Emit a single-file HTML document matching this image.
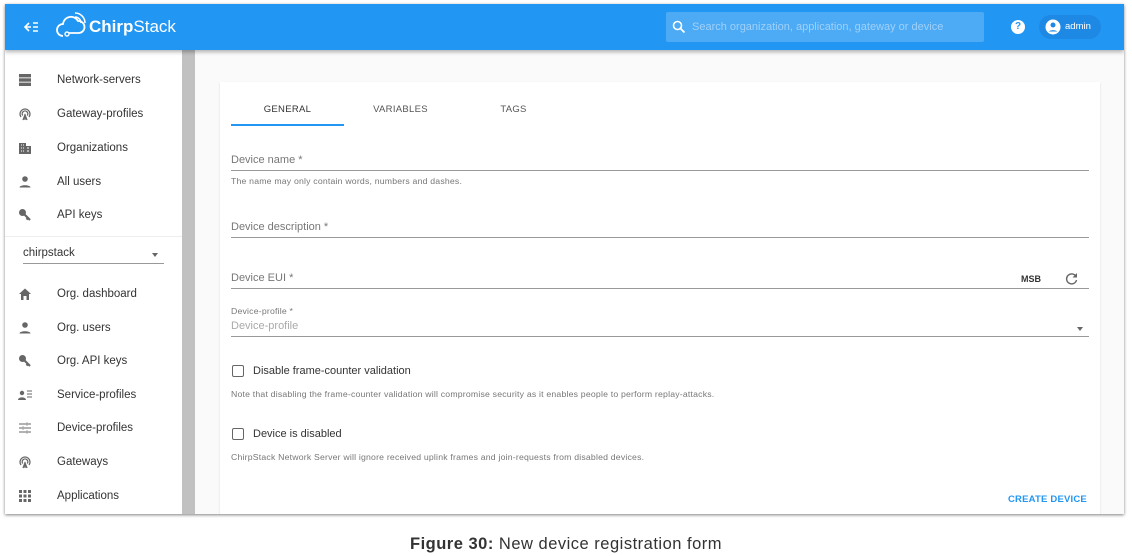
<!DOCTYPE html>
<html><head><meta charset="utf-8"><style>
*{box-sizing:border-box;margin:0;padding:0}
body{width:1132px;height:556px;background:#fff;font-family:"Liberation Sans",sans-serif;position:relative;overflow:hidden}
#frame{position:absolute;left:5px;top:4px;width:1119px;height:510px;background:#fafafa;overflow:hidden;box-shadow:0 1px 3px rgba(0,0,0,.5)}
#bar{position:absolute;left:0;top:0;width:100%;height:46px;background:#2196f3;box-shadow:0 2px 4px rgba(0,0,0,.3);z-index:3}
#side{position:absolute;left:0;top:46px;width:177px;height:464px;background:#fff}
#scroll{position:absolute;left:177px;top:46px;width:13px;height:464px;background:#c1c1c1}
.it{position:absolute;left:0;height:34px;width:177px;font-size:11.5px;color:#333}
.it span{position:absolute;left:52px;top:8px}
.it svg{position:absolute;left:13px;top:7px}
#card{position:absolute;left:215px;top:78px;width:880px;height:440px;background:#fff;box-shadow:0 1px 2px rgba(0,0,0,.12)}
.tab{position:absolute;top:22px;font-size:9.5px;color:#555;letter-spacing:.3px;width:113px;text-align:center}
.lbl{position:absolute;left:11px;font-size:11px;color:#777}
.line{position:absolute;left:11px;width:858px;height:1px;background:#999}
.help{position:absolute;left:11px;font-size:8.7px;color:#777;letter-spacing:.2px}
.cb{position:absolute;left:12px;width:12px;height:12px;border:1.5px solid #666;border-radius:2px}
.cbl{position:absolute;left:33px;font-size:11px;color:#333}
</style></head><body>
<div id="frame">
<div id="bar">
 <svg style="position:absolute;left:18px;top:16px" width="16" height="14" viewBox="0 0 16 14"><path d="M6 3L2 7l4 4M2 7h6M10 3h5M10 7h5M10 11h5" stroke="#fff" stroke-width="1.6" fill="none"/></svg>
 <svg style="position:absolute;left:50px;top:8px" width="32" height="28" viewBox="0 0 32 28"><path d="M8 24a6 6 0 0 1 0-12a8 8 0 0 1 15-3a6 6 0 0 1 1 12H14" stroke="#fff" stroke-width="1.8" fill="none"/><circle cx="12" cy="22" r="2" stroke="#fff" fill="none" stroke-width="1.4"/><path d="M20 5a6 6 0 0 1 6 6M20 1a10 10 0 0 1 10 10" stroke="#fff" stroke-width="1.5" fill="none"/></svg>
 <div style="position:absolute;left:84px;top:13px;color:#fff;font-size:17px"><b>Chirp</b>Stack</div>
 <div style="position:absolute;left:661px;top:8px;width:318px;height:30px;background:#4dabf5;border-radius:2px">
  <svg style="position:absolute;left:6px;top:8px" width="14" height="14" viewBox="0 0 14 14"><circle cx="5.5" cy="5.5" r="4" stroke="#fff" stroke-width="1.6" fill="none"/><path d="M8.5 8.5l4 4" stroke="#fff" stroke-width="1.8"/></svg>
  <span style="position:absolute;left:26px;top:9px;font-size:11px;color:#9fd0f8">Search organization, application, gateway or device</span>
 </div>
 <div style="position:absolute;left:1006px;top:16px;width:14px;height:14px;border-radius:50%;background:#fff;color:#2196f3;font-size:10px;font-weight:bold;text-align:center;line-height:14px">?</div>
 <div style="position:absolute;left:1034px;top:11px;width:62px;height:24px;border-radius:12px;background:#1e88e5"></div>
 <svg style="position:absolute;left:1040px;top:15px" width="16" height="16" viewBox="0 0 16 16"><circle cx="8" cy="8" r="7.5" fill="#fff"/><circle cx="8" cy="6" r="2.5" fill="#1e88e5"/><path d="M3.5 12.5a6 4 0 0 1 9 0" fill="#1e88e5"/></svg>
 <span style="position:absolute;left:1060px;top:17px;color:#fff;font-size:9.5px">admin</span>
</div>
<div id="side">
 <div class="it" style="top:16px"><svg width="14" height="14" viewBox="0 0 14 14"><rect x="1" y="1" width="12" height="3.4" fill="#666"/><rect x="1" y="5.3" width="12" height="3.4" fill="#666"/><rect x="1" y="9.6" width="12" height="3.4" fill="#666"/></svg><span>Network-servers</span></div>
 <div class="it" style="top:50px"><svg width="14" height="14" viewBox="0 0 14 14"><path d="M3 10a5 5 0 1 1 8 0M4.8 8.5a2.8 2.8 0 1 1 4.4 0M7 7v6M5 13l2-5 2 5" stroke="#666" stroke-width="1.3" fill="none"/></svg><span>Gateway-profiles</span></div>
 <div class="it" style="top:84px"><svg width="14" height="14" viewBox="0 0 14 14"><path d="M1 13V2h7v3h5v8z" fill="#666"/><path d="M3 4h1M5 4h1M3 7h1M5 7h1M3 10h1M5 10h1M9 7h2M9 10h2" stroke="#fff" stroke-width="1.1"/></svg><span>Organizations</span></div>
 <div class="it" style="top:118px"><svg width="14" height="14" viewBox="0 0 14 14"><circle cx="7" cy="4" r="2.8" fill="#666"/><path d="M1.5 12.5c0-3 11-3 11 0z" fill="#666"/></svg><span>All users</span></div>
 <div class="it" style="top:151px"><svg width="14" height="14" viewBox="0 0 14 14"><circle cx="4.5" cy="4.5" r="3.5" fill="#666"/><path d="M6 6l6 6M10 10l-1.5 1.5" stroke="#666" stroke-width="2.2"/></svg><span>API keys</span></div>
 <div style="position:absolute;left:0;top:186px;width:177px;height:1px;background:#eee"></div>
 <div style="position:absolute;left:18px;top:197px;font-size:11.5px;color:#333">chirpstack</div>
 <div style="position:absolute;left:147px;top:203px;border:3.5px solid transparent;border-top:4px solid #666"></div>
 <div style="position:absolute;left:18px;top:213px;width:141px;height:1px;background:#999"></div>
 <div class="it" style="top:230px"><svg width="14" height="14" viewBox="0 0 14 14"><path d="M7 1.5l6 5.5h-2v6H8.5V9h-3v4H3V7H1z" fill="#666"/></svg><span>Org. dashboard</span></div>
 <div class="it" style="top:264px"><svg width="14" height="14" viewBox="0 0 14 14"><circle cx="7" cy="4" r="2.8" fill="#666"/><path d="M1.5 12.5c0-3 11-3 11 0z" fill="#666"/></svg><span>Org. users</span></div>
 <div class="it" style="top:297px"><svg width="14" height="14" viewBox="0 0 14 14"><circle cx="4.5" cy="4.5" r="3.5" fill="#666"/><path d="M6 6l6 6M10 10l-1.5 1.5" stroke="#666" stroke-width="2.2"/></svg><span>Org. API keys</span></div>
 <div class="it" style="top:331px"><svg width="14" height="14" viewBox="0 0 14 14"><circle cx="4" cy="5" r="2.2" fill="#666"/><path d="M0 12c0-3.5 8-3.5 8 0z" fill="#666"/><path d="M9 3h5M9 6h5M9 9h5" stroke="#666" stroke-width="1.1"/></svg><span>Service-profiles</span></div>
 <div class="it" style="top:364px"><svg width="14" height="14" viewBox="0 0 14 14"><path d="M1 3h7M10 3h3M1 7h3M6 7h7M1 11h7M10 11h3M9 1.5v3M5 5.5v3M9 9.5v3" stroke="#666" stroke-width="1.1"/></svg><span>Device-profiles</span></div>
 <div class="it" style="top:398px"><svg width="14" height="14" viewBox="0 0 14 14"><path d="M3 10a5 5 0 1 1 8 0M4.8 8.5a2.8 2.8 0 1 1 4.4 0M7 7v6M5 13l2-5 2 5" stroke="#666" stroke-width="1.3" fill="none"/></svg><span>Gateways</span></div>
 <div class="it" style="top:432px"><svg width="14" height="14" viewBox="0 0 14 14" fill="#666"><rect x="1" y="1" width="3" height="3"/><rect x="5.5" y="1" width="3" height="3"/><rect x="10" y="1" width="3" height="3"/><rect x="1" y="5.5" width="3" height="3"/><rect x="5.5" y="5.5" width="3" height="3"/><rect x="10" y="5.5" width="3" height="3"/><rect x="1" y="10" width="3" height="3"/><rect x="5.5" y="10" width="3" height="3"/><rect x="10" y="10" width="3" height="3"/></svg><span>Applications</span></div>
</div>
<div id="scroll"></div>
<div id="card">
 <div class="tab" style="left:11px;color:#333">GENERAL</div>
 <div style="position:absolute;left:11px;top:42px;width:113px;height:2px;background:#2196f3"></div>
 <div class="tab" style="left:124px">VARIABLES</div>
 <div class="tab" style="left:237px">TAGS</div>
 <div class="lbl" style="top:72px">Device name *</div>
 <div class="line" style="top:88px"></div>
 <div class="help" style="top:94px">The name may only contain words, numbers and dashes.</div>
 <div class="lbl" style="top:139px">Device description *</div>
 <div class="line" style="top:155px"></div>
 <div class="lbl" style="top:190px">Device EUI *</div>
 <div style="position:absolute;left:801px;top:192px;font-size:9px;font-weight:bold;color:#333">MSB</div>
 <svg style="position:absolute;left:845px;top:190px" width="13" height="13" viewBox="0 0 13 13"><path d="M11 4.5A5 5 0 1 0 11.5 8" stroke="#666" stroke-width="1.4" fill="none"/><path d="M12 1v4.5H7.5z" fill="#666"/></svg>
 <div class="line" style="top:206px"></div>
 <div class="help" style="top:224px">Device-profile *</div>
 <div class="lbl" style="top:238px;color:#aaa">Device-profile</div>
 <div style="position:absolute;left:857px;top:245px;border:3.5px solid transparent;border-top:4px solid #666"></div>
 <div class="line" style="top:254px"></div>
 <div class="cb" style="top:283px"></div>
 <div class="cbl" style="top:283px">Disable frame-counter validation</div>
 <div class="help" style="top:307px">Note that disabling the frame-counter validation will compromise security as it enables people to perform replay-attacks.</div>
 <div class="cb" style="top:346px"></div>
 <div class="cbl" style="top:346px">Device is disabled</div>
 <div class="help" style="top:370px">ChirpStack Network Server will ignore received uplink frames and join-requests from disabled devices.</div>
 <div style="position:absolute;left:788px;top:412px;font-size:9.5px;font-weight:bold;color:#2196f3;letter-spacing:.2px">CREATE DEVICE</div>
</div>
</div>
<div style="position:absolute;left:0;width:1132px;top:535px;text-align:center;font-size:16.5px;color:#333;letter-spacing:.5px"><b>Figure 30:</b> New device registration form</div>
</body></html>
